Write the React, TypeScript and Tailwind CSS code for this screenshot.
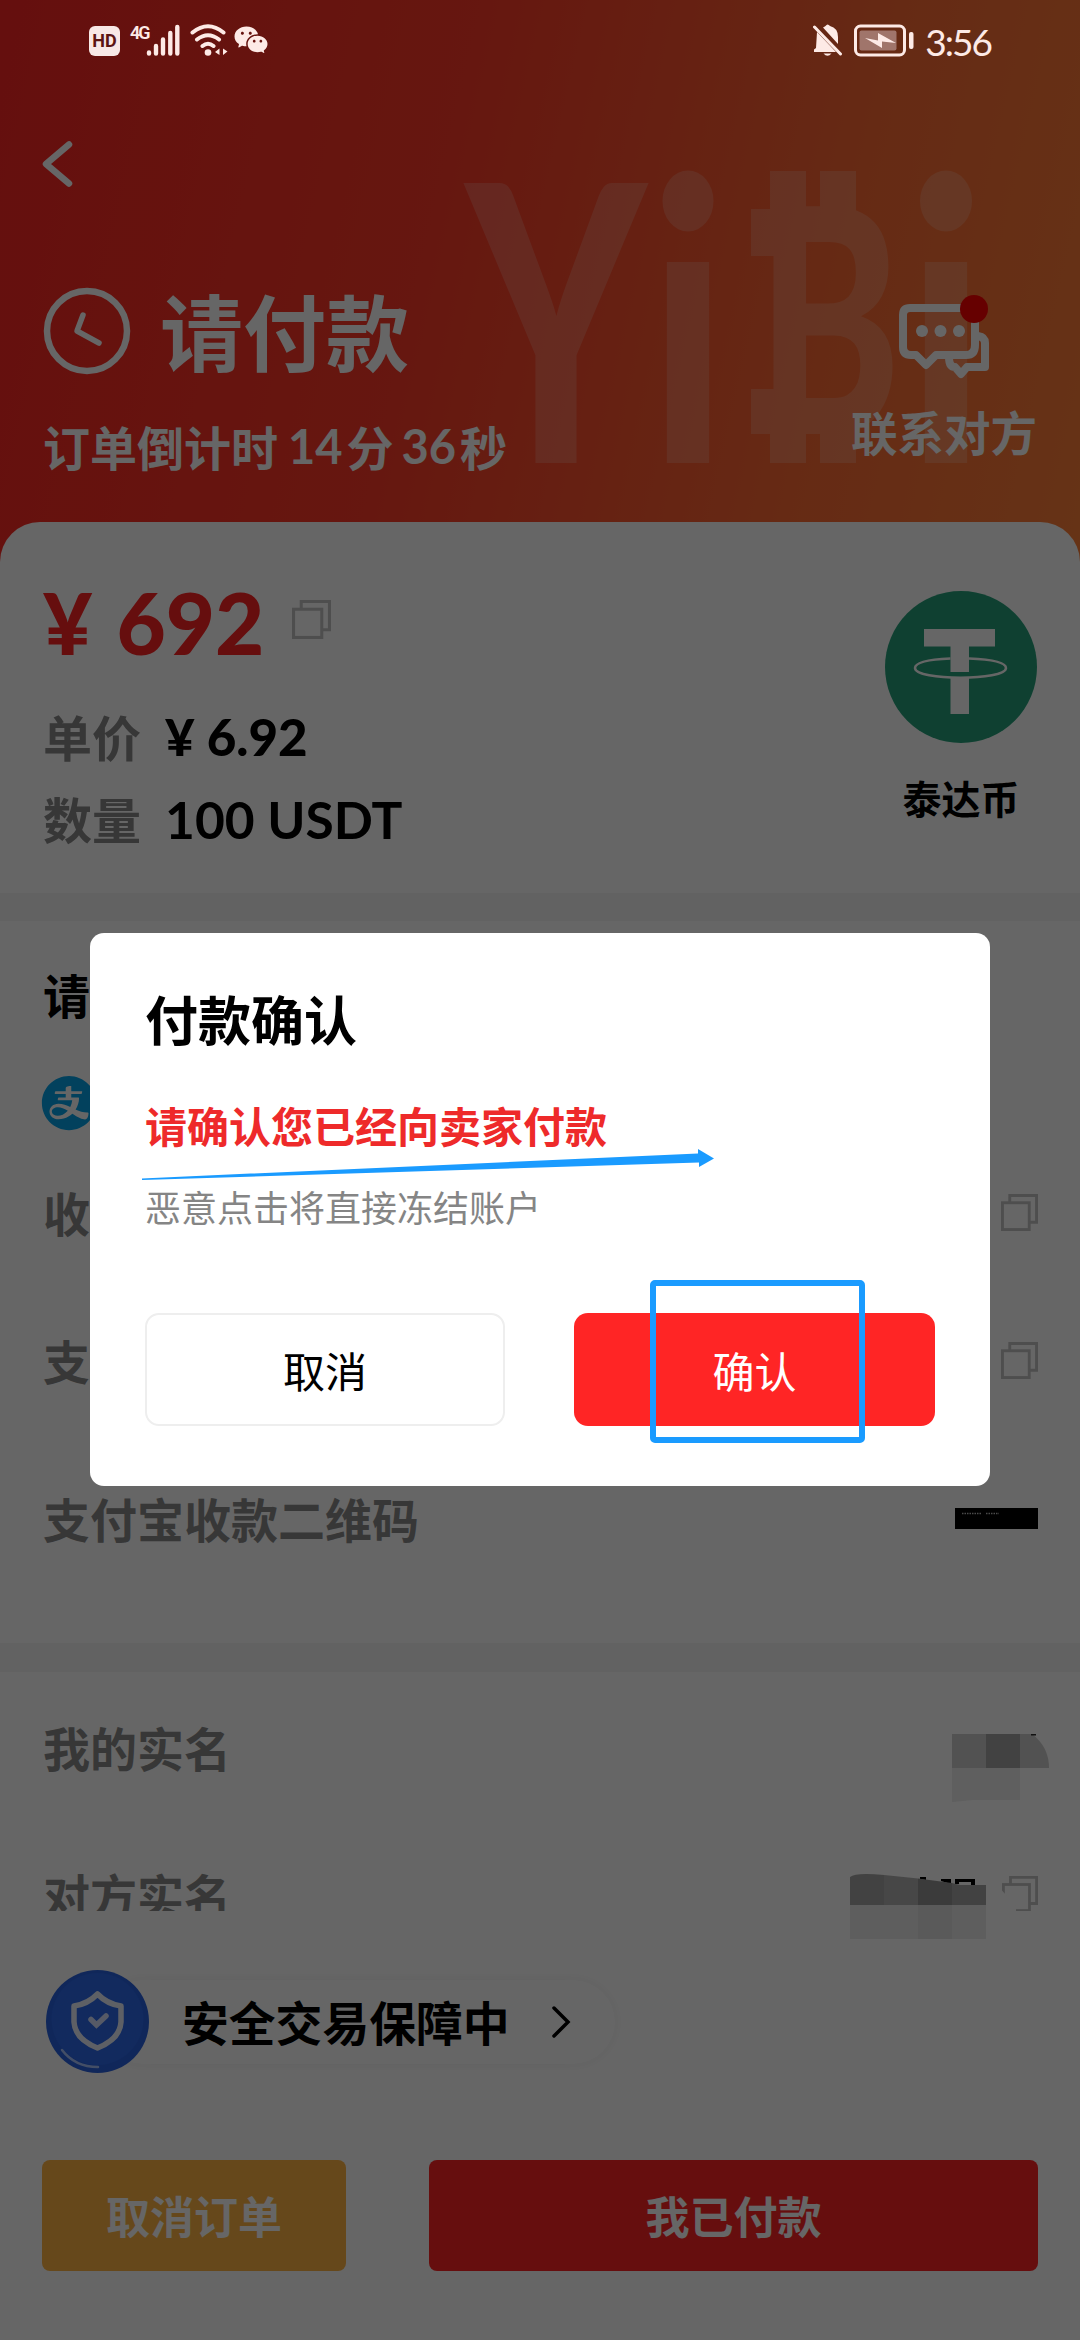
import React from "react";
import { RiWechatFill } from "react-icons/ri";
import { AiFillAlipayCircle } from "react-icons/ai";

const CopyIcon = ({ className = "" }: { className?: string }) => (
  <svg className={className} viewBox="0 0 38 38" fill="none" stroke="#c4c4c4" strokeWidth="3">
    <path d="M9 9V1.5H36.5V29H29" />
    <rect x="1.5" y="9" width="27.5" height="27.5" />
  </svg>
);

function StatusBar() {
  return (
    <div className="relative z-20 h-[82px] px-[89px] flex flex-row justify-between items-start text-[#fdeae6]">
      <div className="flex flex-row items-start pt-6">
        <div className="mt-0.5 w-[31px] h-[30px] rounded-md bg-[#f8e8e6] flex items-center justify-center">
          <span className="font-[Roboto] font-bold text-[18px] leading-[30px] text-[#5c1512]">HD</span>
        </div>
        <span className="ml-2.5 w-[18px] font-[Roboto] font-semibold text-[18px] leading-[17px] tracking-[-2px]">
          4G
        </span>
        <svg className="-ml-0.5 w-[34px] h-8" viewBox="0 0 34 32" stroke="currentColor" strokeWidth="4.4" strokeLinecap="round">
          <path d="M3 28.5V29.5M10 22V29.5M17 15.500V29.5M24.300 9V29.5M31.300 3V29.5" />
        </svg>
        <svg className="ml-2.5 w-[38px] h-8" viewBox="0 0 38 32" fill="none" stroke="currentColor" strokeWidth="4" strokeLinecap="round">
          <path d="M2.500 8.500Q18 -4 33.500 8.500M7 15.500Q18 7 29 15.500M12.500 22Q18 17.500 23.500 22" />
          <circle cx="18" cy="28.500" r="3.300" fill="currentColor" stroke="none" />
          <path d="M29.500 24.500V31L25 28Z M33 31V24.500L37.500 27.500Z" fill="currentColor" stroke="none" />
        </svg>
        <RiWechatFill className="ml-[5px] -mt-0.5 size-9" />
      </div>
      <div className="flex flex-row items-start pt-6">
        <svg className="w-[30px] h-8" viewBox="0 0 30 32" fill="currentColor">
          <path d="M10 3.500Q11.500 2.500 12.500 2Q14.500 -1 17 2Q25 4 25 13V20Z" />
          <path d="M4 8L23 28H1V25.500L3 24Z" />
          <path d="M10.500 29.500H18.500Q14.500 34 10.500 29.500Z" />
          <path d="M1.500 3L27.500 30" stroke="currentColor" strokeWidth="3" strokeLinecap="round" />
        </svg>
        <svg className="ml-[11px] w-[60px] h-[33px]" viewBox="0 0 60 33" fill="none">
          <rect x="1.500" y="2" width="49" height="29" rx="5" stroke="#fdeae6" strokeWidth="3" />
          <rect x="5.500" y="6.500" width="37" height="20" rx="2" fill="#a0756b" />
          <path d="M11 14L24 16.500V9L42 19L28 17.500V24Z" fill="#fdeae6" />
          <rect x="55" y="8" width="4.500" height="17" rx="2" fill="#fdeae6" />
        </svg>
        <span className="ml-[11px] font-[Lato] text-[37px] leading-[35px] tracking-[-2px]">3:56</span>
      </div>
    </div>
  );
}

// brand mark behind the header
const Watermark = () => (
  <svg className="absolute inset-0 w-[1080px] h-[562px]" viewBox="0 0 1080 562">
    <g fill="#ffffff" fontFamily="Lato" fontWeight="900" opacity="0.18">
      <text x="466" y="463" fontSize="386" textLength="180" lengthAdjust="spacingAndGlyphs">Y</text>
      <text x="648" y="463" fontSize="390" textLength="80" lengthAdjust="spacingAndGlyphs">ı</text>
      <ellipse cx="688" cy="201" rx="25.500" ry="30.500" />
      <text x="757" y="434" fontSize="314" textLength="144" lengthAdjust="spacingAndGlyphs">B</text>
      <text x="906" y="463" fontSize="390" textLength="80" lengthAdjust="spacingAndGlyphs">ı</text>
      <ellipse cx="946" cy="201" rx="26" ry="30.500" />
      <rect x="770" y="171" width="36" height="50" />
      <rect x="820" y="171" width="36" height="50" />
      <rect x="770" y="420" width="36" height="43" />
      <rect x="820" y="420" width="36" height="43" />
      <rect x="751" y="209" width="30" height="47" />
      <rect x="751" y="389" width="30" height="45" />
    </g>
  </svg>
);

function Header() {
  return (
    <div className="relative h-[562px] bg-linear-[103deg,#fd2623_0%,#ff3a28_40%,#ff6a34_75%,#ff8038_100%] text-white">
      <Watermark />
      <StatusBar />
      <svg className="mt-[59px] ml-[42px] w-[31px] h-[46px]" viewBox="0 0 31 46" fill="none" stroke="#fff" strokeWidth="6.500" strokeLinecap="round" strokeLinejoin="round">
        <path d="M27 3.500L4 23L27 42.500" />
      </svg>
      <div className="relative mt-[100px] pl-[43px] pr-[43px] flex flex-row justify-between">
        <div className="flex flex-col">
          <div className="flex flex-row items-start h-[88px]">
            <svg className="size-[88px]" viewBox="0 0 88 88" fill="none" stroke="#fff" strokeWidth="6.500" strokeLinecap="round" strokeLinejoin="round">
              <circle cx="44" cy="44" r="40" />
              <path d="M40 28L34 44L56 56" strokeWidth="5.500" />
            </svg>
            <h1 className="ml-[29px] text-[83px] leading-[85px] font-bold">请付款</h1>
          </div>
          <div className="mt-[41px] flex flex-row items-center h-[60px] text-[47px] leading-[60px] font-bold">
            <span>订单倒计时</span>
            <span className="ml-2.5 font-[Lato] text-[47px]">14</span>
            <span className="ml-1">分</span>
            <span className="ml-2 font-[Lato] text-[47px]">36</span>
            <span className="ml-1">秒</span>
          </div>
        </div>
        <div className="flex flex-col items-center">
          <div className="relative mt-4">
            <svg className="w-[92px] h-[78px]" viewBox="0 0 92 78" fill="none" stroke="#fff" strokeWidth="8" strokeLinejoin="round">
              <path d="M12 5H70Q77 5 77 12V42Q77 52 68 52H38L28 62L18 52H13Q5 52 5 44V12Q5 5 12 5Z" />
              <path d="M80 33Q87 34 87 40V64H69L63 71L57 64Q51 64 51 54" />
              <g fill="#fff" stroke="none">
                <circle cx="24" cy="28" r="6" />
                <circle cx="42.500" cy="28" r="6" />
                <circle cx="61" cy="28" r="6" />
              </g>
            </svg>
            <span className="absolute -top-2 right-0.5 size-7 rounded-full bg-[#ff0000]" />
          </div>
          <span className="mt-[20px] text-[46.500px] leading-[60px] font-bold">联系对方</span>
        </div>
      </div>
    </div>
  );
}

function Amount() {
  return (
    <div className="relative -mt-10 h-[371px] rounded-t-[40px] bg-white px-[43px] flex flex-row justify-between">
      <div className="flex flex-col pt-[60px]">
        <div className="flex flex-row items-start h-20">
          <span className="w-[219px] whitespace-nowrap font-[Lato] font-black text-[85px] leading-20 text-[#ff2525] [word-spacing:4px]">
            ¥ 692
          </span>
          <CopyIcon className="mt-[18px] ml-[30px] size-[39px]" />
        </div>
        <div className="mt-[33px] h-[82px] flex flex-row items-center text-[49px] leading-[82px]">
          <span className="text-[#8a8a8a] font-bold">单价</span>
          <span className="ml-6 pt-0.5 font-[Lato] font-black text-[51px] text-black">¥ 6.92</span>
        </div>
        <div className="h-[82px] flex flex-row items-center text-[49px] leading-[82px]">
          <span className="text-[#8a8a8a] font-bold">数量</span>
          <span className="ml-6 pt-0.5 font-[Lato] font-bold text-[51.500px] text-black">100 USDT</span>
        </div>
      </div>
      <div className="flex flex-col items-center pt-[69px]">
        <svg className="size-[152px]" viewBox="0 0 152 152">
          <circle cx="76" cy="76" r="76" fill="#26a17b" />
          <g fill="#fff">
            <rect x="39" y="38" width="71" height="17.500" />
            <rect x="65.500" y="50" width="18.500" height="31" />
            <rect x="65.500" y="87" width="18.500" height="36" />
          </g>
          <path d="M65.500 67.500Q30 69 30 77C30 90 121 90 121 77Q121 69 84 67.500" fill="none" stroke="#fff" strokeWidth="2.500" />
        </svg>
        <span className="mt-[29px] text-[39px] leading-[50px] font-bold text-black">泰达币</span>
      </div>
    </div>
  );
}

function PayInfo() {
  return (
    <div className="h-[722px] bg-white pt-[19px] pl-[43px] pr-[42px] text-[47px] font-bold text-[#8a8a8a]">
      <div className="h-[108px] flex items-center text-black">请</div>
      <div className="h-[104px] pt-1.5 flex items-center">
        <AiFillAlipayCircle className="-ml-[5px] size-[62px] text-[#06a3e8]" />
      </div>
      <div className="h-[120px] flex flex-row items-center justify-between">
        <span>收</span>
        <CopyIcon className="size-[37px]" />
      </div>
      <div className="mt-7 h-[120px] flex flex-row items-center justify-between">
        <span>支</span>
        <CopyIcon className="size-[37px]" />
      </div>
      <div className="mt-[38px] h-[120px] flex flex-row items-center justify-between">
        <span>支付宝收款二维码</span>
        <svg className="w-[83px] h-[21px] bg-black" viewBox="0 0 83 21" stroke="#bbb" strokeWidth="1.500">
          <path d="M7 5.500H27M31 5.500H44" strokeDasharray="1.5 1" />
        </svg>
      </div>
    </div>
  );
}

function RealNames() {
  return (
    <div className="bg-white h-[239px] pt-[17px] pl-[43px] pr-[42px] text-[47px] font-bold text-[#8a8a8a]">
      <div className="relative h-[120px]">
        <span className="leading-[115px]">我的实名</span>
        <svg className="absolute z-20 -right-[11px] top-[45px] w-[97px] h-[68px]" viewBox="0 0 97 68">
          <rect width="34" height="34" fill="#525252" />
          <rect x="34" width="34" height="34" fill="#424242" />
          <path d="M68 0H80Q97 13 97 34H68Z" fill="#525252" />
          <path d="M0 34H68V66H20L0 68Z" fill="#5f5f5f" />
          <rect x="79" y="-1" width="5" height="2.500" fill="#111" />
        </svg>
      </div>
      <div className="relative mt-7 h-[74px]">
        <div className="h-[74px] overflow-hidden flex flex-row justify-between">
          <span className="leading-[113px]">对方实名</span>
          <CopyIcon className="mt-[39px] size-[36px]" />
        </div>
        <svg className="absolute z-20 right-0 top-[35px] w-[188px] h-[67px]" viewBox="0 0 188 67">
          <path d="M136 14H148L166 34V60H136Z" fill="#666" />
          <path d="M70 7V5H76V8M91 9V7H101V12M105 12V7H125V13H121V10H109V12" fill="#000" />
          <path d="M0 5Q6 0 34 3V33H0Z" fill="#424242" />
          <path d="M34 3L68 6.500V33H34Z" fill="#474747" />
          <path d="M68 6.500L102 11V33H68Z" fill="#3b3b3b" />
          <path d="M102 11L110 13H136V33H102Z" fill="#424242" />
          <rect y="33" width="136" height="34" fill="#5e5e5e" />
          <rect x="68" y="33" width="34" height="34" fill="#5a5a5a" />
        </svg>
      </div>
    </div>
  );
}

function Footer() {
  return (
    <div className="bg-white pt-[59px] pl-[42px] pr-[42px] h-[429px]">
      <div className="ml-1 h-[103px] flex flex-row items-center">
        <svg className="relative z-[1] size-[103px]" viewBox="0 0 103 103" fill="none">
          <circle cx="51.500" cy="51.500" r="51.500" fill="#2a63e0" />
          <circle cx="51.500" cy="49" r="46" fill="#2d69ec" />
          <path d="M51.500 24Q61 34 75 36V52Q74 69 51.500 78Q29 69 28 52V36Q42 34 51.500 24Z" stroke="#fff" strokeOpacity="0.9" strokeWidth="5.500" strokeLinejoin="round" />
          <path d="M45 49.500L50.500 55L60 46" stroke="#d6e2ff" strokeWidth="5.500" strokeLinecap="round" />
          <path d="M16 80Q29 97 52 97" stroke="#a9c4ff" strokeWidth="2.500" strokeLinecap="round" />
        </svg>
        <div className="-ml-12 pl-[81px] w-[514px] h-[84px] rounded-full bg-white shadow-[0_0_12px_rgba(0,0,0,0.06)] flex flex-row items-center">
          <span className="text-[46.800px] leading-[84px] -mt-0.5 font-bold text-black">安全交易保障中</span>
          <svg className="ml-[41px] w-[20px] h-[32px]" viewBox="0 0 20 32" fill="none" stroke="#000" strokeWidth="3.500" strokeLinecap="round">
            <path d="M3 2L17 16L3 30" />
          </svg>
        </div>
      </div>
      <div className="mt-[87px] flex flex-row justify-between text-[44px] leading-[111px] font-bold text-white text-center">
        <button className="w-[304px] h-[111px] rounded-lg bg-[#ffb444]">取消订单</button>
        <button className="w-[609px] h-[111px] rounded-lg bg-[#ff2525]">我已付款</button>
      </div>
    </div>
  );
}

function ConfirmDialog() {
  return (
    <div className="absolute inset-0 z-10 bg-black/60 pt-[933px] px-[90px]">
      <div className="relative h-[553px] rounded-[14px] bg-white px-[55px] pt-[51px]">
        <h2 className="text-[53px] leading-[68px] font-bold text-black">付款确认</h2>
        <p className="mt-[43px] text-[42px] leading-[60px] font-bold text-[#ee2a2a]">请确认您已经向卖家付款</p>
        <p className="mt-[21px] text-[36px] leading-[60px] text-[#858585]">恶意点击将直接冻结账户</p>
        <div className="mt-[77px] flex flex-row justify-between text-[42px] leading-[109px]">
          <button className="w-[360px] h-[113px] rounded-[14px] border-2 border-[#eeeeee] text-black">取消</button>
          <button className="w-[361px] h-[113px] rounded-[14px] bg-[#ff2525] text-white leading-[113px]">确认</button>
        </div>
        {/* hand-drawn marks over the dialog */}
        <svg className="absolute left-[52px] top-[216px] w-[574px] h-[34px]" viewBox="0 0 574 34" fill="#1a9bff">
          <path d="M0 29.500L556 4.500V0L572 9.500L557 18V13.500L0 31Z" />
        </svg>
        <div className="absolute left-[560px] top-[347px] w-[215px] h-[163px] rounded-[5px] border-[6px] border-[#1a9bff]" />
      </div>
    </div>
  );
}

export default function App() {
  return (
    <div className="relative w-[1080px] h-[2340px] overflow-hidden bg-[#f5f5f5] font-['Noto_Sans_CJK_SC',sans-serif]">
      <Header />
      <Amount />
      <div className="h-7" />
      <PayInfo />
      <div className="h-[29px]" />
      <RealNames />
      <Footer />
      <ConfirmDialog />
    </div>
  );
}
